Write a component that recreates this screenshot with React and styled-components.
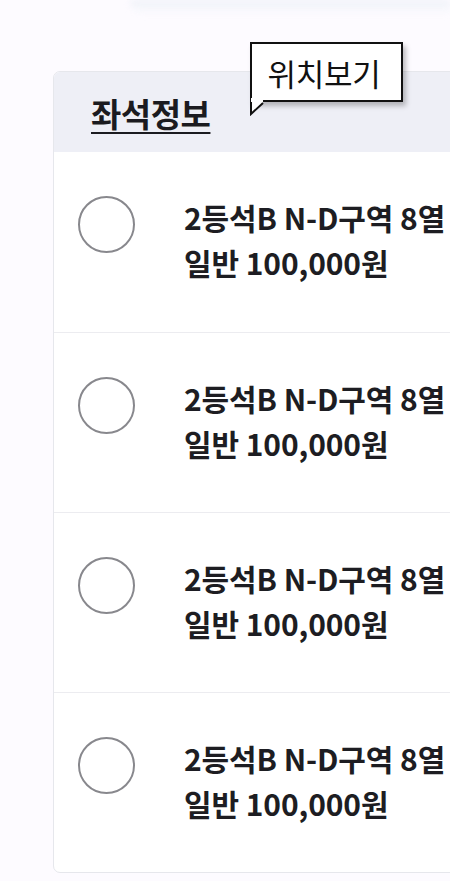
import React from "react";
import styled, { createGlobalStyle } from "styled-components";

const Global = createGlobalStyle`
  html, body { margin: 0; padding: 0; background: #fdfbff; overflow: hidden; }
  body { font-family: "Noto Sans CJK KR", "Noto Sans", sans-serif; color: #1d1d22; }
`;

const Page = styled.div`
  position: relative;
  width: 450px;
  height: 881px;
  overflow: hidden;
`;

const TopShade = styled.div`
  height: 14px;
  margin-left: 130px;
  background: linear-gradient(180deg, #eef1f8 0%, #f6f7fc 60%, rgba(253, 251, 255, 0) 100%);
  border-bottom-left-radius: 30px;
  filter: blur(3px);
`;

const Card = styled.section`
  margin: 57px 0 0 53px;
  width: 420px;
  border: 1px solid #e6e7ec;
  border-radius: 7px;
  background: #fff;
  overflow: hidden;
`;

const Header = styled.div`
  height: 80px;
  background: #eeeff6;
  display: flex;
  align-items: center;
  padding-left: 37px;
  padding-top: 2px;
  box-sizing: border-box;
`;

const Title = styled.h2`
  margin: 0;
  font-size: 33px;
  font-weight: 700;
  letter-spacing: -0.5px;
  line-height: 40px;
  text-decoration: underline;
  text-decoration-thickness: 2px;
  text-underline-offset: 5px;
  color: #1b1b20;
`;

const Row = styled.div`
  display: flex;
  align-items: flex-start;
  height: 180px;
  box-sizing: border-box;
  padding: 44px 0 0 24px;
  gap: 49px;
  border-top: ${(p) => (p.$first ? "none" : "1px solid #ececf0")};
`;

const Radio = styled.span`
  flex: none;
  width: 57px;
  height: 57px;
  border-radius: 50%;
  border: 2px solid #88888d;
  box-sizing: border-box;
`;

const Info = styled.div`
  font-size: 30px;
  font-weight: 700;
  line-height: 45px;
  letter-spacing: -0.1px;
  white-space: nowrap;
  margin-top: -1px;
  color: #1d1d22;
`;

const Tooltip = styled.div`
  position: absolute;
  left: 250px;
  top: 42px;
  width: 153px;
  height: 60px;
  box-sizing: border-box;
  padding-right: 5px;
  border: 2px solid #111;
  background: #fff;
  box-shadow: 3px 4px 5px rgba(0, 0, 0, 0.25);
  display: flex;
  align-items: center;
  justify-content: center;
  font-size: 31px;
  font-weight: 400;
  color: #111;
  letter-spacing: -0.3px;
`;

const Tail = styled.svg`
  position: absolute;
  left: -2px;
  top: 54px;
`;

const seats = [0, 1, 2, 3];

export default function App() {
  return (
    <Page>
      <Global />
      <TopShade />
      <Card>
        <Header>
          <Title>좌석정보</Title>
        </Header>
        {seats.map((i) => (
          <Row key={i} $first={i === 0}>
            <Radio />
            <Info>
              2등석B N-D구역 8열
              <br />
              일반 100,000원
            </Info>
          </Row>
        ))}
      </Card>
      <Tooltip>
        위치보기
        <Tail width="16" height="18" viewBox="0 0 16 18">
          <path d="M1 0 L1 16 L13 4 L13 0 Z" fill="#fff" />
          <path d="M1 4 L1 16 L13 5" fill="none" stroke="#111" strokeWidth="2" />
        </Tail>
      </Tooltip>
    </Page>
  );
}
